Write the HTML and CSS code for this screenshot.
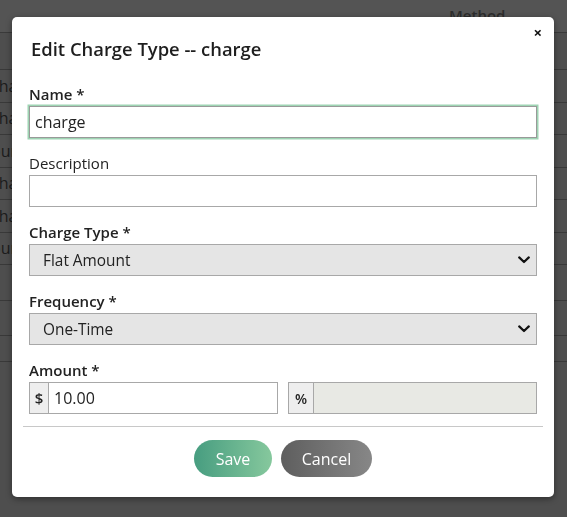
FILE: index.html
```html
<!DOCTYPE html>
<html>
<head>
<meta charset="utf-8">
<link rel="stylesheet" href="styles.css">
</head>
<body>
<div class="page">
  <div class="thead"><span class="th">Method</span></div>
  <div class="row first"></div>
  <div class="row"><span class="cell">charge</span></div>
  <div class="row"><span class="cell">charge</span></div>
  <div class="row"><span class="cell">ound</span></div>
  <div class="row"><span class="cell">charge</span></div>
  <div class="row"><span class="cell">charge</span></div>
  <div class="row"><span class="cell">ound</span></div>
  <div class="row tall"></div>
  <div class="row tall"></div>
  <div class="row short"></div>
</div>
<div class="overlay">
  <div class="modal">
    <button class="close" type="button">&times;</button>
    <h2 class="title">Edit Charge Type -- charge</h2>
    <div class="group">
      <label class="label req">Name *</label>
      <input class="input focus" type="text" value="charge">
    </div>
    <div class="group">
      <label class="label">Description</label>
      <input class="input" type="text" value="">
    </div>
    <div class="group">
      <label class="label req">Charge Type *</label>
      <div class="select"><span>Flat Amount</span>
        <svg class="chev" viewBox="0 0 12 8" width="12" height="8"><path d="M1.2 1.4 L6 6 L10.8 1.4" fill="none" stroke="#111" stroke-width="2.2" stroke-linecap="round" stroke-linejoin="round"/></svg>
      </div>
    </div>
    <div class="group">
      <label class="label req">Frequency *</label>
      <div class="select"><span>One-Time</span>
        <svg class="chev" viewBox="0 0 12 8" width="12" height="8"><path d="M1.2 1.4 L6 6 L10.8 1.4" fill="none" stroke="#111" stroke-width="2.2" stroke-linecap="round" stroke-linejoin="round"/></svg>
      </div>
    </div>
    <div class="group last">
      <label class="label req">Amount *</label>
      <div class="amounts">
        <div class="igroup"><span class="addon dollar">$</span><span class="ival">10.00</span></div>
        <div class="igroup disabled"><span class="addon pct">%</span><span class="ival"></span></div>
      </div>
    </div>
    <hr class="sep">
    <div class="actions">
      <button class="btn save" type="button">Save</button>
      <button class="btn cancel" type="button">Cancel</button>
    </div>
  </div>
</div>
</body>
</html>
```
FILE: styles.css
```css
* { box-sizing: border-box; }
html, body { margin: 0; padding: 0; }
body {
  width: 567px;
  height: 517px;
  overflow: hidden;
  background: #4d4d4d;
  font-family: "Open Sans", "Liberation Sans", sans-serif;
}
.page {
  width: 567px;
  height: 517px;
  background: #4e4e4e;
  overflow: hidden;
}
.thead {
  height: 33px;
  border-bottom: 1.5px solid #3a3a3a;
  background: #545454;
  padding: 4px 0 0 449px;
}
.th {
  font-size: 15px;
  font-weight: 600;
  color: #2c2c2c;
}
.row {
  height: 32.5px;
  border-bottom: 1.5px solid #393939;
  font-size: 16px;
  color: #1c1c1c;
  display: flex;
  align-items: center;
  white-space: nowrap;
}
.row.first { height: 37px; }
.cell { margin-left: -9px; }
.row.tall { height: 35.5px; }
.row.short { height: 26px; }
.overlay {
  position: fixed;
  inset: 0;
  display: flex;
  justify-content: flex-start;
  align-items: flex-start;
  padding: 17px 0 0 12px;
}
.modal {
  position: relative;
  width: 542px;
  height: 480px;
  background: #fff;
  border-radius: 5px;
  box-shadow: 0 2px 6px rgba(0,0,0,0.4);
  padding: 20px 17px 0 17px;
}
.close {
  position: absolute;
  top: 7px;
  right: 12px;
  border: 0;
  background: none;
  padding: 0;
  font-family: "Open Sans", sans-serif;
  font-size: 15px;
  font-weight: 700;
  line-height: 16px;
  color: #111;
}
.title {
  margin: 0 0 24px 2px;
  font-size: 18.4px;
  font-weight: 600;
  line-height: 24px;
  color: #1e1e1e;
  white-space: nowrap;
}
.group { margin-bottom: 16px; }
.group.last { margin-bottom: 0; }
.label {
  display: block;
  font-size: 15px;
  line-height: 19px;
  color: #222;
  margin-bottom: 2px;
}
.label.req { font-weight: 600; }
.input {
  display: block;
  width: 100%;
  height: 32px;
  border: 1.5px solid #a8a8a8;
  background: #fff;
  font-family: "Open Sans", sans-serif;
  font-size: 16px;
  color: #222;
  padding: 0 5px;
  outline: none;
  border-radius: 0;
}
.input.focus {
  border: 1px solid #999;
  box-shadow: 0 0 0 1.5px #9ed4b3;
}
.select {
  height: 32px;
  border: 1.5px solid #a8a8a8;
  background: #e5e5e5;
  display: flex;
  align-items: center;
  justify-content: space-between;
  padding: 0 6px 0 13px;
  font-size: 15.4px;
  color: #222;
}
.chev { display: block; }
.amounts {
  display: flex;
  gap: 10px;
}
.igroup {
  flex: 1;
  height: 32px;
  display: flex;
  border: 1.5px solid #a8a8a8;
  background: #fff;
}
.addon {
  display: flex;
  align-items: center;
  justify-content: center;
  background: #eeeeee;
  border-right: 1.5px solid #a8a8a8;
  font-size: 15px;
  font-weight: 600;
  color: #222;
}
.addon.dollar { width: 19px; }
.addon.pct { width: 25px; font-size: 14px; }
.ival {
  flex: 1;
  display: flex;
  align-items: center;
  padding-left: 5px;
  font-size: 16px;
  color: #222;
}
.igroup.disabled .ival { background: #e8e9e4; }
.sep {
  border: 0;
  border-top: 1.5px solid #c8c8c8;
  margin: 12px -6px 13px -6px;
}
.actions {
  display: flex;
  justify-content: center;
  gap: 9px;
}
.btn {
  height: 37px;
  border: 0;
  border-radius: 19px;
  color: #fff;
  font-family: "Open Sans", sans-serif;
  font-size: 16px;
  padding: 0;
}
.save {
  width: 78px;
  background: linear-gradient(90deg, #479d80, #86c89d);
}
.cancel {
  width: 91px;
  background: linear-gradient(90deg, #5e5e5e, #878787);
}
```
